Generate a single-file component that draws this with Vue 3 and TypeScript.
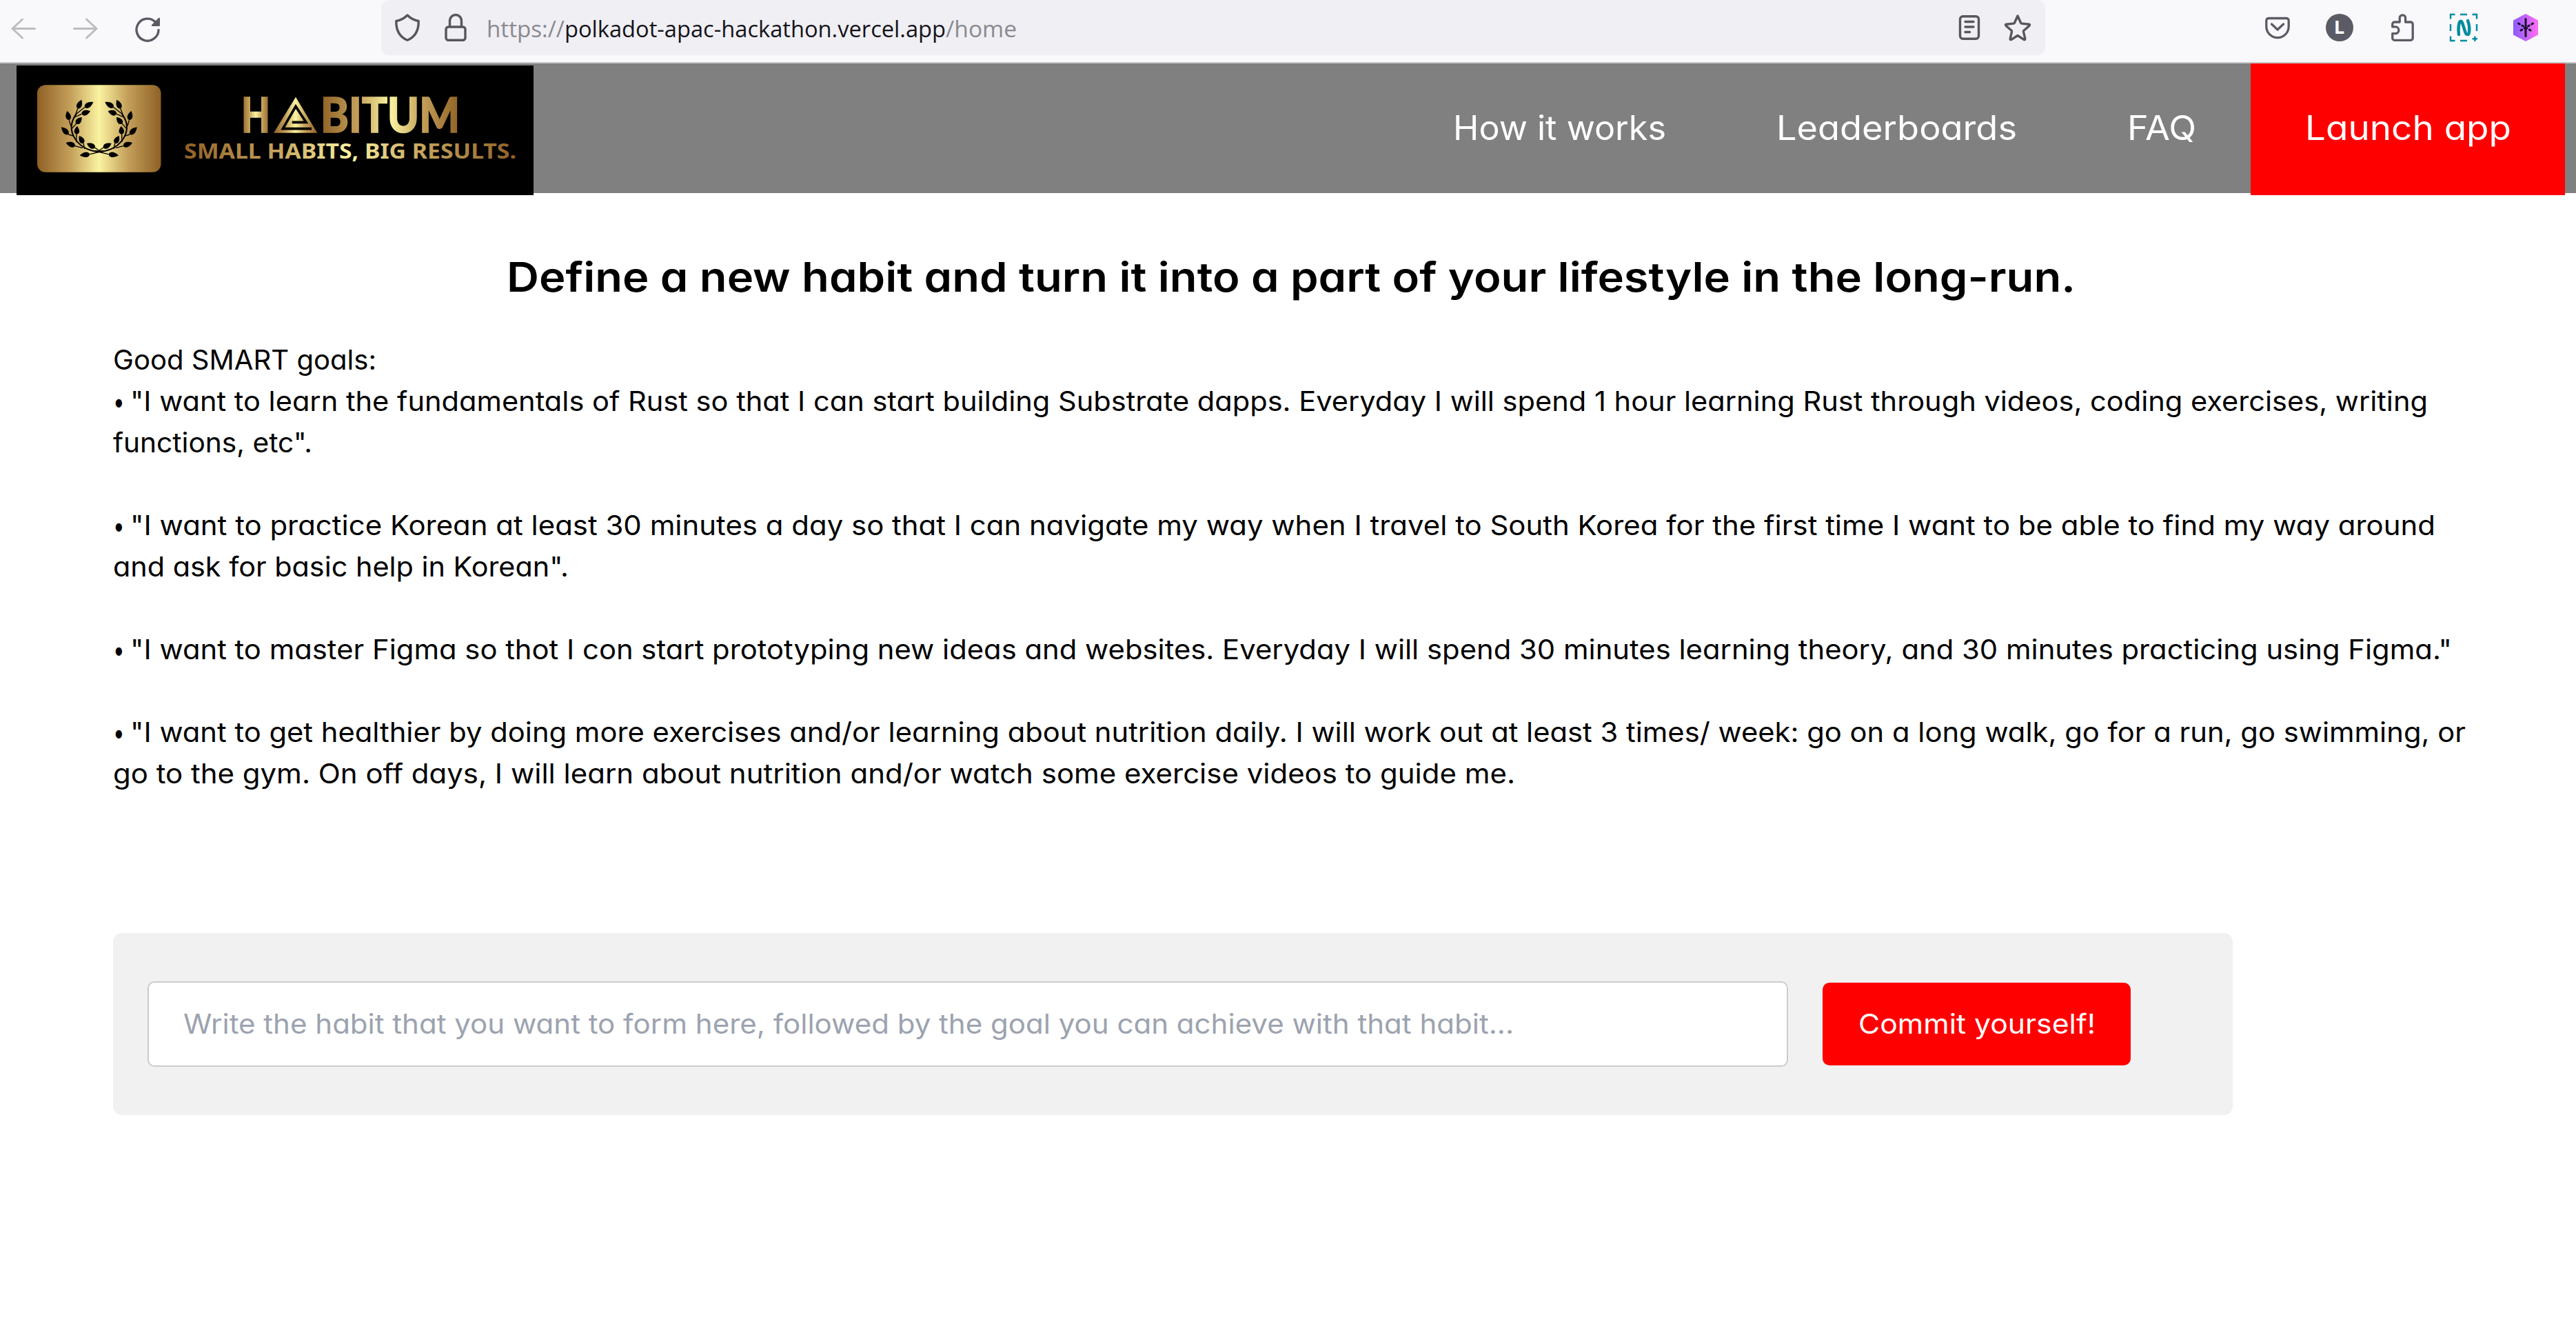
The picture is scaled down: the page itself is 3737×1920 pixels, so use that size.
<script setup lang="ts">
import type { Directive } from 'vue'

// Stretches a run of text horizontally so that it fills the given width in pixels.
const vFit: Directive<HTMLElement, number> = {
  mounted(el, { value }) {
    const natural = el.getBoundingClientRect().width
    el.style.width = `${value}px`
    el.style.transform = `scaleX(${value / natural})`
  },
}

interface Line { text: string; width: number; bullet?: boolean }

const goals: Line[][] = [
  [
    { text: 'Good SMART goals:', width: 382 },
    { text: '"I want to learn the fundamentals of Rust so that I can start building Substrate dapps. Everyday I will spend 1 hour learning Rust through videos, coding exercises, writing', width: 3333, bullet: true },
    { text: 'functions, etc".', width: 289 },
  ],
  [
    { text: '"I want to practice Korean at least 30 minutes a day so that I can navigate my way when I travel to South Korea for the first time I want to be able to find my way around', width: 3344, bullet: true },
    { text: 'and ask for basic help in Korean".', width: 661 },
  ],
  [
    { text: '"I want to master Figma so thot I con start prototyping new ideas and websites. Everyday I will spend 30 minutes learning theory, and 30 minutes practicing using Figma."', width: 3368, bullet: true },
  ],
  [
    { text: '"I want to get healthier by doing more exercises and/or learning about nutrition daily. I will work out at least 3 times/ week: go on a long walk, go for a run, go swimming, or', width: 3388, bullet: true },
    { text: 'go to the gym. On off days, I will learn about nutrition and/or watch some exercise videos to guide me.', width: 2034 },
  ],
]

const links: Line[] = [
  { text: 'How it works', width: 309 },
  { text: 'Leaderboards', width: 349 },
  { text: 'FAQ', width: 100 },
]

// Leaves of one laurel branch: tip, base, and where the stalk joins the branch.
const leaves: number[][] = [
  [235, 104, 218, 143, 206, 176],
  [286, 114, 248, 137, 212, 166],
  [273, 154, 235, 166, 204, 180],
  [172, 153, 181, 193, 188, 218],
  [236, 180, 211, 209, 190, 232],
  [147, 223, 178, 255, 202, 262],
  [216, 219, 213, 255, 212, 288],
  [225, 261, 243, 294, 248, 318],
  [167, 291, 207, 305, 240, 314],
  [258, 294, 294, 313, 322, 333],
  [227, 346, 271, 341, 330, 327],
]

function leafPath([tx, ty, bx, by]: number[]): string {
  const dx = bx - tx
  const dy = by - ty
  const len = Math.hypot(dx, dy)
  const nx = (-dy / len) * 15
  const ny = (dx / len) * 15
  const ax = tx + dx * 0.45
  const ay = ty + dy * 0.45
  const cx = tx + dx * 0.85
  const cy = ty + dy * 0.85
  return `M${tx} ${ty}C${ax + nx} ${ay + ny} ${cx + nx} ${cy + ny} ${bx} ${by}C${cx - nx} ${cy - ny} ${ax - nx} ${ay - ny} ${tx} ${ty}Z`
}
</script>

<template>
  <div class="page">
    <div class="toolbar">
      <div class="history">
        <svg class="ico" viewBox="0 0 40 40"><path d="M36.5 21.5H4M18.5 8L4 21.5L18.5 35" class="dim" /></svg>
        <svg class="ico" viewBox="0 0 40 40"><path d="M3.5 21.5H36M21.5 8L36 21.5L21.5 35" class="dim" /></svg>
        <svg class="ico" viewBox="0 0 40 40">
          <path d="M36 23.5A16 16 0 1 1 31 11.5" fill="none" stroke="#5b5b66" stroke-width="3.4" stroke-linecap="round" />
          <path d="M38 7V16.5a1.5 1.5 0 0 1-1.5 1.5H27a1.2 1.2 0 0 1-.9-2L36 6a1.2 1.2 0 0 1 2 1Z" fill="#5b5b66" />
        </svg>
      </div>
      <div class="urlbar">
        <svg class="ico" viewBox="0 0 40 40"><path d="M20 2C15.500 6.500 9.500 9.500 3.800 10.500C3.500 24 8.500 33.500 20 38.300C31.500 33.500 36.500 24 36.200 10.500C30.500 9.500 24.500 6.500 20 2Z" class="line" /></svg>
        <svg class="ico lock" viewBox="0 0 40 40"><path d="M11.500 18.500V10A8.500 8.500 0 0 1 28.500 10V18.500M9.500 19H30.500A3.500 3.500 0 0 1 34 22.500V34.800A3.500 3.500 0 0 1 30.500 38.300H9.500A3.500 3.500 0 0 1 6 34.800V22.500A3.500 3.500 0 0 1 9.500 19Z" class="line" /></svg>
        <div class="url"><span v-fit="113">https://</span><b v-fit="553">polkadot-apac-hackathon.vercel.app</b><span v-fit="103">/home</span></div>
        <svg class="ico reader" viewBox="0 0 40 40">
          <rect x="6.500" y="3.800" width="27" height="32.500" rx="4" class="line" />
          <path d="M14 11.500H26M14 19H26M14 26.500H20.500" class="line" />
        </svg>
        <svg class="ico star" viewBox="0 0 40 40"><path d="M20 3L24.600 13.200Q25 14 26 14.100L36.500 15.200Q38.300 15.700 37 17.200L29 24.200Q28.300 25 28.500 26L30.800 36.200Q30.800 38.200 29 37.400L20 31.500L11 37.400Q9.200 38.200 9.200 36.200L11.500 26Q11.700 25 11 24.200L3 17.200Q1.700 15.700 3.500 15.200L14 14.100Q15 14 15.400 13.200Z" class="line" /></svg>
      </div>
      <div class="extensions">
        <svg class="ico" viewBox="0 0 40 40"><path d="M7 6.500H33A3.200 3.200 0 0 1 36.200 9.700V18.500A16.200 16.200 0 0 1 3.800 18.500V9.700A3.200 3.200 0 0 1 7 6.500ZM11.500 15L20 23L28.500 15" class="ext" /></svg>
        <svg class="ico" viewBox="0 0 40 40">
          <circle cx="20" cy="20" r="20" fill="#5b5b66" />
          <text x="12" y="29" class="initial">L</text>
        </svg>
        <svg class="ico" viewBox="0 0 40 40"><path d="M6.700 18.900V15A3 3 0 0 1 9.700 12H17.200V6A4.200 4.200 0 0 1 25.600 6V12H33.200A3 3 0 0 1 36.200 15V35.300A3 3 0 0 1 33.200 38.300H9.700A3 3 0 0 1 6.700 35.300V28.700H11A4.900 4.900 0 0 0 11 18.900Z" class="ext" /></svg>
        <svg class="ico" viewBox="0 0 40 40" fill="none" stroke="#008c9e">
          <path d="M7.500 1H1V7.500M15 1H25M32.500 1H39V7.500M1 15V25M39 15V25M1 32.500V39H7.500M15 39H25M32.500 36.300H40M36.300 32.500V40" stroke-width="2.400" />
          <path d="M13 30C12 22 13 15 14 12C15 10 17 10 18 13L22.500 27C24 31 27 31 27.800 28C28.500 24 28.300 16 26 10" stroke-width="4.400" stroke-linecap="round" />
        </svg>
        <svg class="ico" viewBox="0 0 40 40">
          <defs><linearGradient id="hex"><stop offset="0" stop-color="#8b5cff" /><stop offset="1" stop-color="#ff6cf2" /></linearGradient></defs>
          <path d="M20 0L38 9.500V30.500L20 40L2 30.500V9.500Z" fill="url(#hex)" />
          <path d="M20 7.500V32.500" class="ink" />
          <path d="M9.500 14L30.500 26M30.500 14L9.500 26" class="ink dots" />
        </svg>
      </div>
    </div>

    <header class="nav">
      <svg class="logo" viewBox="0 0 750 188">
        <defs>
          <linearGradient id="gold">
            <stop offset="0" stop-color="#8f6025" /><stop offset=".27" stop-color="#c4a05a" /><stop offset=".5" stop-color="#faf3a0" /><stop offset=".73" stop-color="#c4a05a" /><stop offset="1" stop-color="#8f6025" />
          </linearGradient>
          <linearGradient id="goldTag" gradientUnits="userSpaceOnUse" x1="244" x2="724" y1="0" y2="0">
            <stop offset="0" stop-color="#8f6025" /><stop offset=".27" stop-color="#c4a05a" /><stop offset=".5" stop-color="#faf3a0" /><stop offset=".73" stop-color="#c4a05a" /><stop offset="1" stop-color="#8f6025" />
          </linearGradient>
        </defs>
        <rect width="750" height="188" fill="#000" />
        <rect x="30" y="28.300" width="179.500" height="126.500" rx="12" fill="url(#gold)" />
        <g transform="translate(16 15) scale(.33333)">
          <g v-for="side in 2" :key="side" :transform="side === 2 ? 'translate(623 0) scale(-1 1)' : undefined">
            <path d="M330 327C280 336 233 312 208 276C186 242 183 205 212 166" fill="none" stroke="#000" stroke-width="6" />
            <path v-for="(l, i) in leaves" :key="'s' + i" :d="`M${l[2]} ${l[3]}L${l[4]} ${l[5]}`" stroke="#000" stroke-width="4" />
            <path v-for="(l, i) in leaves" :key="'l' + i" :d="leafPath(l)" />
          </g>
        </g>
        <text x="326" y="96.800" textLength="42" lengthAdjust="spacingAndGlyphs" class="wordmark">H</text>
        <g transform="translate(226 25) scale(.33333)">
          <path d="M537 62L631 218H441Z" fill="url(#gold)" />
          <path d="M521 172H582L537 103L481 200H606" fill="none" stroke="#000" stroke-width="11" />
        </g>
        <text x="441" y="96.800" textLength="202" lengthAdjust="spacingAndGlyphs" class="wordmark">BITUM</text>
        <text x="243" y="135" textLength="482" lengthAdjust="spacingAndGlyphs" class="tagline">SMALL HABITS, BIG RESULTS.</text>
      </svg>
      <nav class="links">
        <a v-for="link in links" :key="link.text" class="link"><span v-fit="link.width">{{ link.text }}</span></a>
        <a class="launch"><span v-fit="299">Launch app</span></a>
      </nav>
    </header>

    <main class="content">
      <h1 class="title"><span v-fit="2276">Define a new habit and turn it into a part of your lifestyle in the long-run.</span></h1>
      <section class="goals">
        <p v-for="(goal, i) in goals" :key="i" class="goal">
          <span v-for="line in goal" :key="line.text" class="row"><span v-if="line.bullet" v-fit="25">• </span><span v-fit="line.width">{{ line.text }}</span></span>
        </p>
      </section>
      <section class="card">
        <div class="field"><span v-fit="1930">Write the habit that you want to form here, followed by the goal you can achieve with that habit...</span></div>
        <button class="commit"><span v-fit="344">Commit yourself!</span></button>
      </section>
    </main>
  </div>
</template>

<style>
body { margin: 0; background: #fff; }
</style>

<style scoped>
.page {
  width: 3737px;
  height: 1920px;
  overflow: hidden;
  color: #000;
  font-family: Inter, "Open Sans", sans-serif;
  font-feature-settings: "cv11";
  font-size: 39.5px;
  white-space: nowrap;
}
.page span, .page b { display: inline-block; white-space: pre; transform-origin: 0 50%; text-align: left; }
.ico { display: block; flex: none; width: 40px; height: 40px; overflow: visible; }
.toolbar {
  display: flex;
  align-items: flex-start;
  height: 90px;
  background: #f9f9fb;
  border-bottom: 2px solid #c8c8c9;
}
.history { display: flex; align-items: center; gap: 50px; width: 539px; height: 80px; padding-left: 14px; }
.dim { fill: none; stroke: #bcbcc0; stroke-width: 3; stroke-linecap: round; stroke-linejoin: round; }
.line { fill: none; stroke: #56565b; stroke-width: 3.4; stroke-linecap: round; stroke-linejoin: round; }
.ext { fill: none; stroke: #5b5b66; stroke-width: 3.3; stroke-linecap: round; stroke-linejoin: round; }
.ink { fill: none; stroke: #1a0d2e; stroke-width: 3; stroke-linecap: round; }
.dots { stroke-dasharray: 2 4.1; }
.initial { font: 700 27px "Noto Sans", sans-serif; fill: #fff; }
.urlbar {
  display: flex;
  align-items: center;
  box-sizing: border-box;
  width: 2414px;
  height: 80px;
  padding: 0 20px 0 18px;
  background: #f0eff4;
  border-radius: 12px;
}
.lock { margin-left: 30px; }
.url {
  flex: 1;
  height: 80px;
  margin-left: 25px;
  color: #8a8a8f;
  font: 400 33.5px/83px "Open Sans", "Noto Sans", sans-serif;
}
.url b { color: #15141a; font-weight: 400; }
.reader { margin-right: 30px; }
.extensions { display: flex; align-items: center; gap: 50px; height: 80px; margin-left: 317px; }

.nav {
  display: flex;
  align-items: flex-start;
  justify-content: space-between;
  height: 188px;
  padding: 0 16px 0 24px;
  background: #808080;
}
.logo { display: block; width: 750px; height: 188px; margin-top: 3px; }
.wordmark { font: 900 71px Lato, sans-serif; fill: url(#gold); stroke: url(#gold); stroke-width: 1.6; }
.tagline { font: 700 31.200px "Noto Sans", sans-serif; fill: url(#goldTag); }
.links { display: flex; color: #fff; font-size: 49px; line-height: 187px; }
.link { padding: 0 79px 0 81px; }
.launch { box-sizing: border-box; width: 456px; height: 191px; text-align: center; background: #f00; }

.content { padding: 77px 160px 0 164px; }
.title { margin: 0 0 45px; padding-left: 571px; font-size: 59px; font-weight: 600; line-height: 89px; height: 90px; }
.goals { display: flex; flex-direction: column; gap: 60px; line-height: 60px; }
.goal { display: flex; flex-direction: column; align-items: flex-start; margin: 0; }
.page .row { display: flex; height: 60px; }
.card {
  display: flex;
  align-items: center;
  gap: 50px;
  box-sizing: border-box;
  width: 3075px;
  height: 264px;
  margin-top: 201px;
  padding-left: 50px;
  background: #f1f1f1;
  border-radius: 13px;
}
.field {
  box-sizing: border-box;
  width: 2380px;
  height: 124px;
  padding-left: 50px;
  color: #9ca3af;
  line-height: 120px;
  background: #fff;
  border: 2px solid #ccc;
  border-radius: 10px;
}
.commit {
  width: 447px;
  height: 120px;
  padding: 0;
  color: #fff;
  font: inherit;
  font-feature-settings: inherit;
  line-height: 120px;
  background: #f00;
  border: 0;
  border-radius: 10px;
}
</style>
